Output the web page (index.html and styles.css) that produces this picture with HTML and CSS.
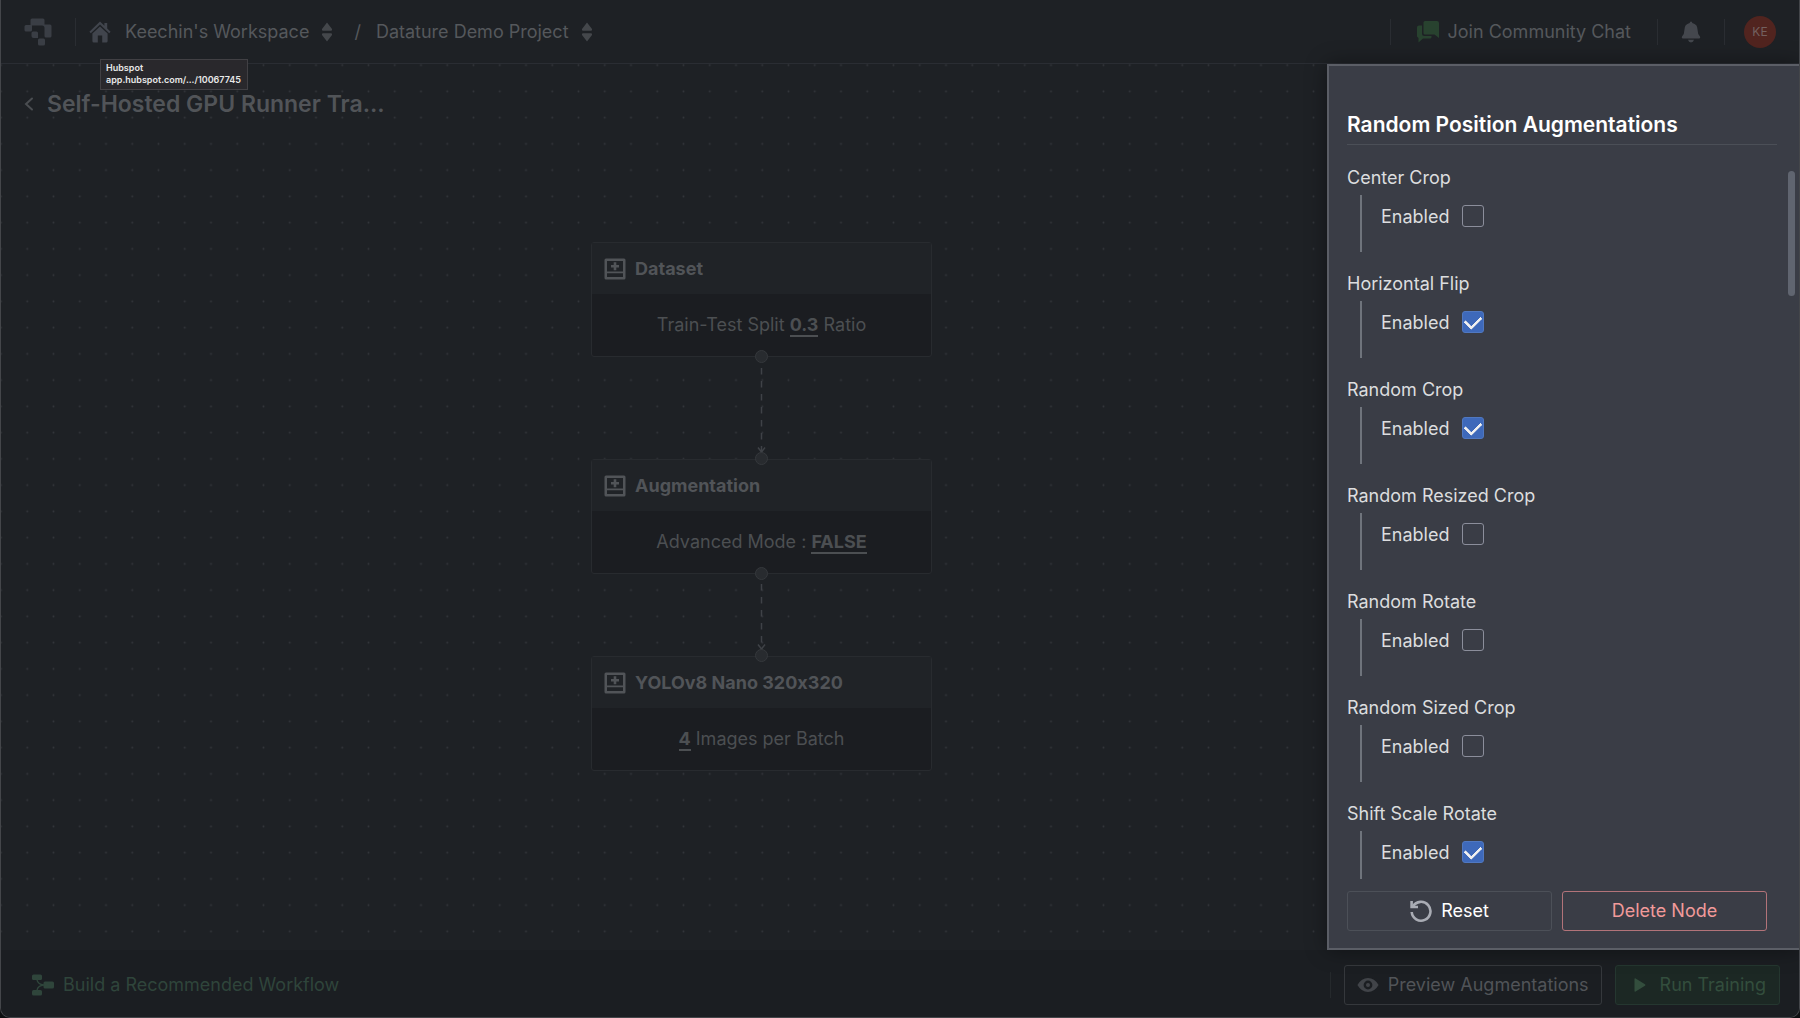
FILE: index.html
```
<!DOCTYPE html>
<html lang="en">
<head>
    <meta charset="UTF-8">
    <meta name="viewport" content="width=device-width, initial-scale=1.0">
    <title>Datature Demo Project - Workflow</title>
    <link rel="stylesheet" href="styles.css">
</head>
<body>
    <!-- Shared icons -->
    <svg class="sprite" width="0" height="0" aria-hidden="true">
        <symbol id="icon-sort" viewBox="0 0 12 20">
            <path d="M6 0.5 L11 7 Q11.6 8.6 10 8.8 H2 Q0.4 8.6 1 7 Z M6 19.5 L11 13 Q11.6 11.4 10 11.2 H2 Q0.4 11.4 1 13 Z"/>
        </symbol>
        <symbol id="icon-node" viewBox="0 0 22 22">
            <path fill-rule="evenodd" d="M2 0.5 H20 Q21.5 0.5 21.5 2 V20 Q21.5 21.5 20 21.5 H2 Q0.5 21.5 0.5 20 V2 Q0.5 0.5 2 0.5 Z M3 3 V13.5 H19 V3 Z M3 15.2 V19 H19 V15.2 Z"/>
            <path d="M9.7 4.2 H12.3 V6.9 H15 V9.5 H12.3 V12.2 H9.7 V9.5 H7 V6.9 H9.7 Z"/>
        </symbol>
    </svg>

    <div class="app">
        <header class="topbar">
            <a class="logo" href="#" aria-label="Datature">
                <svg width="28" height="28" viewBox="0 0 28 28">
                    <path d="M8 0.5 H19 Q20.5 0.5 20.5 2 V6.5 H26 Q27.5 6.5 27.5 8 V18 Q27.5 19.5 26 19.5 H22 Q20.5 19.5 20.5 18 V10 Q20.5 7.5 18 7.5 H8 V12 Q8 13.5 6.5 13.5 H2 Q0.5 13.5 0.5 12 V8.5 Q0.5 7 2 7 H6.5 V2 Q6.5 0.5 8 0.5 Z"/>
                    <path d="M9 13.5 H12.5 Q14 13.5 14 15 V20 H9.5 Q7.5 20 7.5 18 V15 Q7.5 13.5 9 13.5 Z"/>
                    <rect x="14" y="20.5" width="7" height="7" rx="1.5"/>
                </svg>
            </a>
            <nav class="breadcrumb">
                <a class="home" href="#" aria-label="Home">
                    <svg width="22" height="22" viewBox="0 0 22 22">
                        <path d="M11 0.6 L15.4 4.8 V2 H18.2 V7.5 L21.6 10.8 L20.2 12.2 L11 3.4 L1.8 12.2 L0.4 10.8 Z"/>
                        <path d="M11 5.4 L18.6 12.6 V20 Q18.6 21.5 17.2 21.5 H13.2 V14.6 H8.8 V21.5 H4.8 Q3.4 21.5 3.4 20 V12.6 Z"/>
                    </svg>
                </a>
                <button class="crumb" type="button">Keechin's Workspace
                    <svg width="12" height="20"><use href="#icon-sort"/></svg>
                </button>
                <span class="slash">/</span>
                <button class="crumb" type="button">Datature Demo Project
                    <svg width="12" height="20"><use href="#icon-sort"/></svg>
                </button>
            </nav>
            <div class="topbar-right">
                <a class="chat" href="#">
                    <svg width="22" height="22" viewBox="0 0 22 22">
                        <path d="M8 0 H20 Q22 0 22 2 V17 L17.5 13.5 H8 Q6.5 13.5 6.5 12 V1.5 Q6.5 0 8 0 Z"/>
                        <path d="M2 4.5 H5 V12.5 Q5 15 7.5 15 H14.5 V16 Q14.5 17.5 13 17.5 H6 L1.5 21.5 V17 L0 15.5 V6.5 Q0 4.5 2 4.5 Z"/>
                    </svg>
                    Join Community Chat
                </a>
                <button class="bell" type="button" aria-label="Notifications">
                    <svg width="20" height="22" viewBox="0 0 20 22">
                        <path d="M10 0.5 Q11.2 0.5 11.3 2 Q16.6 3.2 16.6 9 Q16.6 13.5 19 15.6 Q19.8 17.4 18.2 17.6 H1.8 Q0.2 17.4 1 15.6 Q3.4 13.5 3.4 9 Q3.4 3.2 8.7 2 Q8.8 0.5 10 0.5 Z M7 18.8 H13 Q12.4 21.4 10 21.4 Q7.6 21.4 7 18.8 Z"/>
                    </svg>
                </button>
                <button class="avatar" type="button">KE</button>
            </div>
        </header>

        <div class="tooltip">
            <span>Hubspot</span>
            <span>app.hubspot.com/.../10067745</span>
        </div>

        <main class="workspace">
            <svg class="dots" aria-hidden="true">
                <defs>
                    <pattern id="dot-grid" x="-13.1" y="-12" width="26.25" height="26.25" patternUnits="userSpaceOnUse">
                        <circle cx="13.1" cy="13.1" r="0.9"/>
                    </pattern>
                </defs>
                <rect width="100%" height="100%" fill="url(#dot-grid)"/>
            </svg>

            <div class="page-title">
                <a href="#" aria-label="Back">
                    <svg width="10" height="14" viewBox="0 0 10 14"><path d="M8 1.5 L2 7 L8 12.5"/></svg>
                </a>
                <h1>Self-Hosted GPU Runner Tra...</h1>
            </div>

            <svg class="edges" aria-hidden="true">
                <path class="edge" d="M760.5 304 V394"/>
                <path class="edge" d="M760.5 520 V591"/>
                <path class="arrow" d="M757 383.5 L760.5 388 L764 383.5 M757 580.5 L760.5 585 L764 580.5"/>
            </svg>

            <section class="node node-dataset">
                <h2><svg width="22" height="22"><use href="#icon-node"/></svg>Dataset</h2>
                <p>Train-Test Split <b>0.3</b> Ratio</p>
                <span class="handle handle-out"></span>
            </section>
            <section class="node node-augmentation">
                <span class="handle handle-in"></span>
                <h2><svg width="22" height="22"><use href="#icon-node"/></svg>Augmentation</h2>
                <p>Advanced Mode : <b>FALSE</b></p>
                <span class="handle handle-out"></span>
            </section>
            <section class="node node-model">
                <span class="handle handle-in"></span>
                <h2><svg width="22" height="22"><use href="#icon-node"/></svg>YOLOv8 Nano 320x320</h2>
                <p><b>4</b> Images per Batch</p>
            </section>

            <aside class="panel">
                <h2 class="panel-title">Random Position Augmentations</h2>
                <div class="options">
                    <fieldset class="option">
                        <legend>Center Crop</legend>
                        <label>Enabled <input type="checkbox"></label>
                    </fieldset>
                    <fieldset class="option">
                        <legend>Horizontal Flip</legend>
                        <label>Enabled <input type="checkbox" checked></label>
                    </fieldset>
                    <fieldset class="option">
                        <legend>Random Crop</legend>
                        <label>Enabled <input type="checkbox" checked></label>
                    </fieldset>
                    <fieldset class="option">
                        <legend>Random Resized Crop</legend>
                        <label>Enabled <input type="checkbox"></label>
                    </fieldset>
                    <fieldset class="option">
                        <legend>Random Rotate</legend>
                        <label>Enabled <input type="checkbox"></label>
                    </fieldset>
                    <fieldset class="option">
                        <legend>Random Sized Crop</legend>
                        <label>Enabled <input type="checkbox"></label>
                    </fieldset>
                    <fieldset class="option">
                        <legend>Shift Scale Rotate</legend>
                        <label>Enabled <input type="checkbox" checked></label>
                    </fieldset>
                </div>
                <div class="panel-actions">
                    <button class="btn btn-reset" type="button">
                        <svg width="22" height="22" viewBox="0 0 22 22">
                            <path d="M3 6.4 A9.4 9.4 0 1 1 1.7 12"/>
                            <path d="M1.6 1 V7 H8"/>
                        </svg>
                        Reset
                    </button>
                    <button class="btn btn-delete" type="button">Delete Node</button>
                </div>
                <span class="scroll-thumb"></span>
            </aside>
        </main>

        <footer class="bottombar">
            <a class="recommended" href="#">
                <svg width="22" height="22" viewBox="0 0 22 22">
                    <rect x="0" y="0.5" width="10" height="5.5" rx="1.5"/>
                    <rect x="11.5" y="7.5" width="10.5" height="7" rx="1.5"/>
                    <rect x="0" y="16" width="10" height="5.5" rx="1.5"/>
                    <path d="M5 6 Q6 10.5 12 11 Q6 11.5 5 16" fill="none" stroke="currentColor" stroke-width="1.3"/>
                </svg>
                Build a Recommended Workflow
            </a>
            <div class="bottombar-actions">
                <button class="btn btn-preview" type="button">
                    <svg width="22" height="14" viewBox="0 0 22 14">
                        <path fill-rule="evenodd" d="M11 0 Q17.5 0 21.6 7 Q17.5 14 11 14 Q4.5 14 0.4 7 Q4.5 0 11 0 Z M11 2.6 A4.4 4.4 0 1 0 11 11.4 A4.4 4.4 0 1 0 11 2.6 Z"/>
                        <circle cx="11" cy="7" r="2"/>
                    </svg>
                    Preview Augmentations
                </button>
                <button class="btn btn-run" type="button">
                    <svg width="12" height="14" viewBox="0 0 12 14"><path d="M0.5 1.2 Q0.5 0 1.6 0.5 L11 6.2 Q12 7 11 7.8 L1.6 13.5 Q0.5 14 0.5 12.8 Z"/></svg>
                    Run Training
                </button>
            </div>
        </footer>
    </div>
</body>
</html>
```
FILE: styles.css
```
* {
    margin: 0;
    padding: 0;
    box-sizing: border-box;
}

body {
    background: #0d0f11;
    color: #55585c;
    font-family: 'Inter', sans-serif;
    font-feature-settings: 'calt' 0;
    font-size: 18px;
    line-height: 24px;
}

a {
    color: inherit;
    text-decoration: none;
}

button {
    background: none;
    border: none;
    color: inherit;
    font: inherit;
    cursor: pointer;
}

svg {
    display: block;
    flex-shrink: 0;
    fill: currentColor;
}

.sprite {
    position: absolute;
}

.app {
    position: relative;
    display: flex;
    flex-direction: column;
    height: 100vh;
    background: #1e2125;
    border: 1px solid #44464a;
    border-top: none;
    border-radius: 0 0 10px 10px;
    overflow: hidden;
}

/* Top bar */
.topbar {
    display: flex;
    align-items: center;
    justify-content: space-between;
    height: 64px;
    padding: 0 23px;
    border-bottom: 1px solid #2a2d33;
    flex-shrink: 0;
}

.logo {
    color: #3a3e45;
    padding-right: 23px;
    border-right: 1px solid #2a2d32;
}

.breadcrumb {
    display: flex;
    align-items: center;
    flex: 1;
    padding-left: 13px;
}

.home {
    color: #41454d;
    margin-right: 14px;
}

.crumb {
    display: flex;
    align-items: center;
    gap: 12px;
}

.crumb svg {
    color: #44474b;
}

.slash {
    margin: 0 15px 0 21px;
}

.topbar-right {
    display: flex;
    align-items: center;
}

.chat {
    display: flex;
    align-items: center;
    gap: 9px;
    height: 26px;
    padding: 0 26px;
    border-left: 1px solid #2a2d32;
    border-right: 1px solid #2a2d32;
}

.chat svg {
    color: #28422f;
}

.bell {
    height: 26px;
    padding: 0 23px;
    border-right: 1px solid #2a2d32;
    color: #44474d;
}

.avatar {
    width: 32px;
    height: 32px;
    margin-left: 19px;
    border-radius: 50%;
    background: #51241f;
    color: #73605f;
    font-size: 12px;
}

.tooltip {
    position: absolute;
    top: 59px;
    left: 99px;
    z-index: 2;
    display: flex;
    flex-direction: column;
    padding: 2px 6px 3px 5px;
    background: #29282c;
    border: 1px solid #414044;
    color: #e8e8e8;
    font-size: 9px;
    font-weight: 600;
    line-height: 12px;
}

/* Canvas */
.workspace {
    position: relative;
    flex: 1;
}

.dots,
.edges {
    position: absolute;
    inset: 0;
    width: 100%;
    height: 100%;
}

.dots {
    fill: #34373c;
}

.page-title {
    position: relative;
    display: flex;
    align-items: center;
    gap: 13px;
    padding: 26px 23px;
}

.page-title svg {
    fill: none;
    stroke: #4a4d51;
    stroke-width: 2;
    stroke-linecap: round;
}

.page-title h1 {
    font-size: 23px;
    font-weight: 600;
    line-height: 28px;
    color: #515458;
}

.edge,
.arrow {
    fill: none;
    stroke: #3f4247;
    stroke-width: 1.5;
}

.edge {
    stroke-dasharray: 6.5 6.5;
}

.node {
    position: absolute;
    left: 590px;
    width: 341px;
    background: #1b1d21;
    border: 1px solid #282b2f;
    border-radius: 3px;
}

.node-dataset {
    top: 178px;
}

.node-augmentation {
    top: 395px;
}

.node-model {
    top: 592px;
}

.node h2 {
    display: flex;
    align-items: center;
    gap: 9px;
    height: 51px;
    padding: 0 12px;
    background: #202327;
    font-size: 18px;
    font-weight: 700;
    color: #515458;
}

.node p {
    padding: 19px 12px;
    text-align: center;
    color: #4c4f52;
}

.node b {
    font-weight: 700;
    border-bottom: 2px solid #4c4f52;
}

.handle {
    position: absolute;
    left: 50%;
    width: 13px;
    height: 13px;
    margin-left: -7px;
    border: 1px solid #35383c;
    border-radius: 50%;
    background: #282b2f;
}

.handle-in {
    top: -8px;
}

.handle-out {
    bottom: -7px;
}

/* Side panel */
.panel {
    position: absolute;
    top: 0;
    right: -1px;
    bottom: 0;
    display: flex;
    flex-direction: column;
    width: 473px;
    padding: 43px 22px 17px 18px;
    background: #3a3d46;
    border: 2px solid #5b5e66;
    border-right-width: 1px;
    box-shadow: 0 0 20px rgba(0, 0, 0, 0.4);
    color: #dcdddf;
}

.panel-title {
    padding-bottom: 4px;
    border-bottom: 1px solid #4b4f57;
    color: #fff;
    font-size: 21px;
    font-weight: 600;
    line-height: 31px;
}

.options {
    flex: 1;
    min-height: 0;
    margin: 21px 0 12px;
    overflow: hidden;
}

.option {
    height: 106px;
    border: none;
}

.option label {
    display: flex;
    gap: 13px;
    height: 57px;
    margin: 5px 0 0 13px;
    padding: 10px 0 0 19px;
    border-left: 2px solid #6f747c;
}

.option input {
    display: grid;
    place-items: center;
    width: 22px;
    height: 22px;
    appearance: none;
    border: 1px solid #8b8e9b;
    border-radius: 3px;
}

.option input:checked {
    background: #3e69ba;
    border-color: #5078c0;
}

.option input:checked::before {
    content: '';
    width: 13px;
    height: 8px;
    margin-bottom: 4px;
    border: solid #f0f0f0;
    border-width: 0 0 3px 3px;
    border-radius: 1px;
    transform: rotate(-45deg);
}

.panel-actions {
    display: grid;
    grid-template-columns: 1fr 1fr;
    gap: 10px;
    margin-right: 10px;
}

.scroll-thumb {
    position: absolute;
    top: 105px;
    right: 4px;
    width: 7px;
    height: 125px;
    border-radius: 4px;
    background: #606570;
}

.btn {
    display: flex;
    align-items: center;
    justify-content: center;
    gap: 9px;
    height: 40px;
    padding: 0 12px;
    border: 1px solid;
    border-radius: 3px;
}

.btn-reset {
    border-color: #4c5058;
    color: #fff;
}

.btn-reset svg {
    fill: none;
    stroke: #a9acb4;
    stroke-width: 2.6;
}

.btn-delete {
    border-color: #b27379;
    color: #f19a9a;
}

/* Bottom bar */
.bottombar {
    display: flex;
    align-items: center;
    justify-content: space-between;
    height: 67px;
    padding: 3px 19px 0 31px;
    background: #1b1e22;
    flex-shrink: 0;
}

.recommended {
    display: flex;
    align-items: center;
    gap: 9px;
    color: #2f453b;
}

.bottombar-actions {
    display: flex;
    gap: 13px;
}

.bottombar-actions::before {
    content: '';
    align-self: center;
    width: 1px;
    height: 26px;
    background: #25292c;
}

.btn-preview {
    border-color: #35383c;
    color: #515458;
}

.btn-preview svg {
    color: #414449;
}

.btn-run {
    gap: 14px;
    padding: 0 13px 0 18px;
    background: #1c2824;
    border-color: #253730;
    color: #334e3d;
}
```
